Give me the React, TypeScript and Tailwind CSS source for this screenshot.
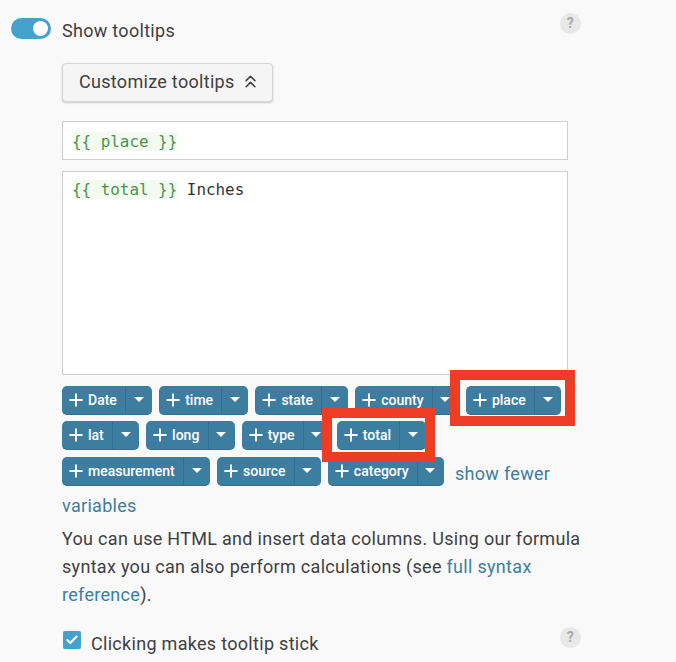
import { Check, ChevronsUp, Plus } from "lucide-react"

type VarProps = { name: string; mark?: string }

const VarButton = ({ name, mark }: VarProps) => {
    return (
        <div className="relative flex h-[29px] items-stretch rounded-[5px] border-b border-[#33708f] bg-[#3d7ea0] text-white">
            <div className="flex items-center pl-[4px] pr-[8.3px] text-[14px] font-medium">
                <Plus size={20} strokeWidth={2.3} className="mr-[2px]" />
                {name}
            </div>
            <div className="flex w-[27px] items-center justify-center border-l border-[#33708f]">
                <div className="mb-[1px] mr-[1px] h-0 w-0 border-x-[5px] border-t-[5px] border-x-transparent border-t-white" />
            </div>
            {mark && <div className={"absolute z-10 border-[10px] border-[#ee3d24] " + mark} />}
        </div>
    )
}

const Help = () => {
    return (
        <div className="flex h-[21px] w-[21px] items-center justify-center rounded-full bg-[#e8e8e8] text-[14px] font-bold text-[#a8a8a8]">?</div>
    )
}

export default function App() {
    return (
        <div className="h-[662px] w-full overflow-hidden bg-[#f9f9f9] text-[18px] tracking-[0.3px] text-[#404040]" style={{ fontFamily: "Roboto, sans-serif" }}>
            <div className="w-[581px] pl-[11px] pt-[13px]">
                <div className="flex items-start">
                    <div className="mt-[5px] flex h-[21px] w-10 items-center justify-end rounded-full bg-[#45a2cc] pr-[3px]">
                        <div className="h-[15px] w-[15px] rounded-full bg-white" />
                    </div>
                    <div className="ml-[11px] mt-[4px] flex-1 leading-[27px]">Show tooltips</div>
                    <Help />
                </div>

                <div className="pl-[51px]">
                    <div className="mt-[19px] flex h-[39px] w-[211px] items-center rounded-[4px] border border-[#d6d6d6] bg-[#f5f5f5] pb-[2px] pl-[16px] shadow-[0_1px_2px_rgba(0,0,0,0.2)]">
                        Customize tooltips
                        <ChevronsUp size={21} strokeWidth={1.8} className="ml-[5px]" />
                    </div>

                    <div className="mt-[19px] h-[39px] w-[506px] border border-[#cfcfcf] bg-white pl-[9px] pt-[9px] font-['DejaVu_Sans_Mono',monospace] text-[15.9px] leading-[21px] tracking-normal text-[#333]">
                        <span className="bg-[#f3fbf1] text-[#4a9450]">{"{{ place }}"}</span>
                    </div>
                    <div className="mt-[11px] h-[204px] w-[506px] border border-[#cfcfcf] bg-white pl-[9px] pt-[7px] font-['DejaVu_Sans_Mono',monospace] text-[15.9px] leading-[21px] tracking-normal text-[#333]">
                        <span className="bg-[#f3fbf1] text-[#4a9450]">{"{{ total }}"}</span> Inches
                    </div>

                    <div className="mt-[11px] flex gap-[7px] tracking-normal">
                        <VarButton name="Date" />
                        <VarButton name="time" />
                        <VarButton name="state" />
                        <VarButton name="county" />
                        <VarButton name="place" mark="-top-[16px] -left-[16px] -right-[14px] -bottom-[12px]" />
                    </div>
                    <div className="mt-[6px] flex gap-[7px] tracking-normal">
                        <VarButton name="lat" />
                        <VarButton name="long" />
                        <VarButton name="type" />
                        <VarButton name="total" mark="-top-[13px] -left-[15px] -right-[9px] -bottom-[13px]" />
                    </div>
                    <div className="mt-[7px] flex gap-[7px]">
                        <div className="flex gap-[7px] tracking-normal">
                            <VarButton name="measurement" />
                            <VarButton name="source" />
                            <VarButton name="category" />
                        </div>
                        <span className="ml-[4px] mt-[3px] leading-[27px] text-[#3d7ea0]">show fewer</span>
                    </div>
                    <div className="mt-[5px] leading-[28px] text-[#3d7ea0]">variables</div>

                    <div className="mt-[5px] w-[530px] leading-[28px]">
                        You can use HTML and insert data columns. Using our formula syntax you can also perform calculations (see <span className="text-[#3d7ea0]">full syntax reference</span>).
                    </div>
                </div>

                <div className="mt-[21px] flex items-start pl-[51px]">
                    <div className="mt-[1px] ml-[1px] flex h-[18px] w-[18px] items-center justify-center rounded-[2px] bg-[#45a2cc]">
                        <Check size={14} strokeWidth={3.5} className="text-white" />
                    </div>
                    <div className="ml-[10px] mt-[2px] flex-1 leading-[24px]">Clicking makes tooltip stick</div>
                    <div className="-mt-[3px]">
                        <Help />
                    </div>
                </div>
            </div>
        </div>
    )
}
